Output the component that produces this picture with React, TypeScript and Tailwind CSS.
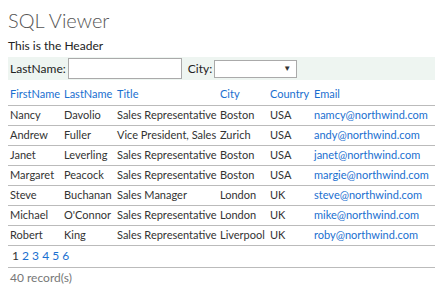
const rows = [
  ["Nancy", "Davolio", "Sales Representative", "Boston", "USA", "namcy@northwind.com"],
  ["Andrew", "Fuller", "Vice President, Sales", "Zurich", "USA", "andy@northwind.com"],
  ["Janet", "Leverling", "Sales Representative", "Boston", "USA", "janet@northwind.com"],
  ["Margaret", "Peacock", "Sales Representative", "Boston", "USA", "margie@northwind.com"],
  ["Steve", "Buchanan", "Sales Manager", "London", "UK", "steve@northwind.com"],
  ["Michael", "O'Connor", "Sales Representative", "London", "UK", "mike@northwind.com"],
  ["Robert", "King", "Sales Representative", "Liverpool", "UK", "roby@northwind.com"],
]

const cols = ["FirstName", "LastName", "Title", "City", "Country", "Email"]
const widths = ["w-[54px]", "w-[53px]", "w-[103px]", "w-[50px]", "w-[44px]", "w-[123px]"]

export default function App() {
  return (
    <main className="min-h-screen bg-white pl-2 pt-[5px] text-[11px] text-[#333] font-['Lato','Liberation_Sans',sans-serif]">
      <h1 className="text-[20px] font-light leading-[30px] text-[#555]">SQL Viewer</h1>
      <p className="mt-[2px] text-[12px] leading-[18px] text-[#222]">This is the Header</p>

      {/* Filters */}
      <div className="mt-[2px] flex h-[23px] w-full items-center bg-[#eef5f1] pl-[2px] text-[12px]">
        <label className="text-[#222]">LastName:</label>
        <input className="ml-[2px] h-[21px] w-[114px] border border-[#aaa] bg-white outline-none" />
        <label className="ml-[6px] text-[#222]">City:</label>
        <div className="relative ml-[2px] h-[18px] w-[83px] border border-[#aaa] bg-white">
          <span className="absolute right-[5px] top-[1px] text-[8px] text-[#333]">▼</span>
        </div>
      </div>

      {/* Table */}
      <table className="mt-[3px] w-[427px] table-fixed border-collapse">
        <colgroup>
          {widths.map((w, i) => (
            <col key={i} className={w} />
          ))}
        </colgroup>
        <thead>
          <tr className="h-[22px] border-b border-[#bbb]">
            {cols.map((c) => (
              <th key={c} className="px-[2px] text-left font-normal text-[#1a6fd0]">
                {c}
              </th>
            ))}
          </tr>
        </thead>
        <tbody>
          {rows.map((r) => (
            <tr key={r[0]} className="h-[20px] border-b border-[#bbb]">
              {r.map((v, i) => (
                <td
                  key={i}
                  className={`overflow-hidden whitespace-nowrap px-[2px] ${i === 5 ? "text-[#1a6fd0]" : ""}`}
                >
                  {v}
                </td>
              ))}
            </tr>
          ))}
          <tr className="h-[22px] border-b border-[#bbb]">
            <td colSpan={6} className="px-[4px] text-[12px]">
              <span className="text-[#333]">1</span>{" "}
              {[2, 3, 4, 5, 6].map((n) => (
                <span key={n} className="text-[#1a6fd0]">
                  {n}{" "}
                </span>
              ))}
            </td>
          </tr>
        </tbody>
      </table>
      <p className="mt-[1px] pl-[2px] text-[12px] leading-[18px] text-[#777]">40 record(s)</p>
    </main>
  )
}
